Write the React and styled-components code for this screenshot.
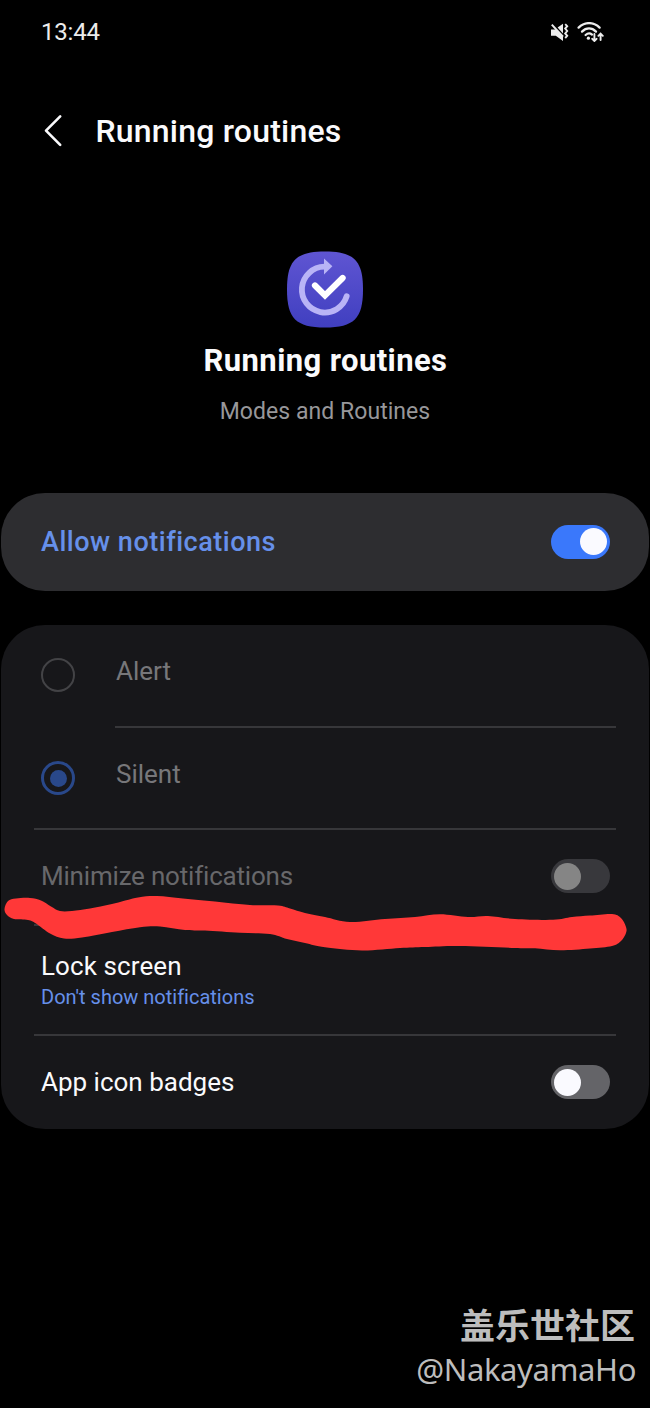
import React from "react";
import styled, { createGlobalStyle } from "styled-components";

const GlobalStyle = createGlobalStyle`
  * { box-sizing: border-box; }
  html, body { margin: 0; padding: 0; background: #000; }
  body {
    font-family: Roboto, "Noto Sans CJK SC", sans-serif;
    font-variant-ligatures: none;
    color: #fafafc;
  }
  h1, h2, p { margin: 0; }
`;

const Screen = styled.main`
  position: relative;
  display: flex;
  flex-direction: column;
  width: 650px;
  height: 1408px;
  background: #000;
  overflow: hidden;
`;

const StatusBar = styled.div`
  display: flex;
  align-items: center;
  justify-content: space-between;
  height: 64px;
  padding: 0 45px 0 41px;
`;

const Clock = styled.span`
  font-size: 24px;
  line-height: 28px;
  letter-spacing: -0.2px;
  color: #ececec;
`;

const StatusIcons = styled.div`
  display: flex;
  gap: 8px;
  svg { display: block; }
`;

const TopBar = styled.header`
  display: flex;
  align-items: center;
  height: 133px;
  padding: 0 44px;
  gap: 32.5px;
  svg { display: block; }
`;

const PageTitle = styled.h1`
  font-size: 32px;
  line-height: 40px;
  font-weight: 500;
  letter-spacing: 0.2px;
`;

const Hero = styled.section`
  display: flex;
  flex-direction: column;
  align-items: center;
  height: 296px;
  padding-top: 54px;
  svg { display: block; }
`;

const HeroTitle = styled.h2`
  margin-top: 14px;
  padding-left: 1px;
  font-size: 31px;
  line-height: 38px;
  font-weight: 700;
  letter-spacing: 0.4px;
`;

const HeroCaption = styled.p`
  margin-top: 17px;
  font-size: 23px;
  line-height: 30px;
  letter-spacing: 0.05px;
  color: #97979a;
`;

const Card = styled.section`
  margin: 0 1px ${(p) => p.$gap || 0}px;
  border-radius: 44px;
  background: ${(p) => p.$bg};
`;

const Row = styled.div`
  display: flex;
  align-items: center;
  justify-content: ${(p) => (p.$start ? "flex-start" : "space-between")};
  height: ${(p) => p.$h}px;
  padding: 0 39px ${(p) => p.$bottom || 0}px 40px;
`;

const Divider = styled.hr`
  height: 2px;
  margin: 0 33px 0 ${(p) => p.$left}px;
  border: 0;
  background: #37373a;
`;

const Label = styled.span`
  font-size: ${(p) => p.$size || 26}px;
  line-height: 34px;
  font-weight: ${(p) => p.$weight || 400};
  letter-spacing: ${(p) => p.$track || 0}px;
  color: ${(p) => p.$color || "#fafafc"};
`;

const OptionLabel = styled(Label)`
  margin: 0 0 8px 41px;
`;

const Stack = styled.div`
  display: flex;
  flex-direction: column;
`;

const Detail = styled.span`
  font-size: 20px;
  line-height: 28px;
  color: #6690ea;
`;

const Track = styled.span`
  display: flex;
  align-items: center;
  justify-content: ${(p) => (p.$on ? "flex-end" : "flex-start")};
  width: 59px;
  height: 34px;
  padding: 0 3px;
  border-radius: 17px;
  background: ${(p) => p.$bg};
`;

const Knob = styled.span`
  width: 27px;
  height: 27px;
  border-radius: 50%;
  background: ${(p) => p.$bg};
`;

const Radio = styled.span`
  display: flex;
  align-items: center;
  justify-content: center;
  width: 34px;
  height: 34px;
  border: ${(p) => (p.$on ? "3px solid #29488a" : "2px solid #434346")};
  border-radius: 50%;
`;

const Dot = styled.span`
  width: 17px;
  height: 17px;
  border-radius: 50%;
  background: #29488a;
`;

const Scribble = styled.svg`
  position: absolute;
  left: 0;
  top: 889px;
`;

const Watermark = styled.footer`
  display: flex;
  flex-direction: column;
  align-items: flex-end;
  margin-top: auto;
  padding: 0 14px 17px 0;
  color: #bdbdbd;
`;

const Community = styled.span`
  margin-right: 1px;
  font-family: "Noto Sans CJK SC", sans-serif;
  font-weight: 700;
  font-size: 35px;
  line-height: 49px;
`;

const Author = styled.span`
  font-family: "Noto Sans", sans-serif;
  font-size: 31px;
  line-height: 43px;
  letter-spacing: -0.4px;
`;

function Switch({ on, track, knob = "#fafaff" }) {
  return (
    <Track $on={on} $bg={track}>
      <Knob $bg={knob} />
    </Track>
  );
}

function MuteIcon() {
  return (
    <svg width="19" height="20" viewBox="0 0 19 20" fill="none">
      <path d="M1 7.600h4l1.400.2 6.600 7V19l-7.200-5.200H1z" fill="#ececec" />
      <path d="M7.600 5.600L13 1.800v9.600z" fill="#ececec" />
      <path d="M1.800 2.600L13 14.800" stroke="#ececec" strokeWidth="2" />
      <path d="M15.200 2.200l2 2-2 2.400 2 2.400-2 2.400 2 2.400-2 2.200" stroke="#ececec" strokeWidth="1.900" />
    </svg>
  );
}

function WifiIcon() {
  return (
    <svg width="28" height="20" viewBox="0 0 28 20" fill="none" stroke="#ececec" strokeWidth="2.3" strokeLinecap="round">
      <path d="M1.600 5.600C7.800-0.400 16.400-0.400 22.600 5.600" />
      <path d="M5 9.600c4.200-4.200 9.800-4.200 14 0" />
      <path d="M8.600 13c2.200-1.900 4.600-1.900 6.400-.4" />
      <circle cx="11.400" cy="16.200" r="1.600" fill="#ececec" stroke="none" />
      <path d="M17.400 12v6.400M15.200 16.800l2.200 2.200 2.200-2.200M23.600 18v-6M21.400 13.800l2.200-2.200 2.200 2.200" strokeWidth="1.900" />
    </svg>
  );
}

function BackIcon() {
  return (
    <svg width="19" height="34" viewBox="0 0 19 34" fill="none">
      <path d="M16.200 2.400L2 16.600l14.200 14.200" stroke="#fafafc" strokeWidth="2.600" strokeLinecap="round" strokeLinejoin="round" />
    </svg>
  );
}

function RoutinesIcon() {
  return (
    <svg width="76" height="77" viewBox="0 0 76 77" fill="none">
      <defs>
        <linearGradient id="tile" x1="0" y1="0" x2="0" y2="1">
          <stop offset="0" stopColor="#5f55d2" />
          <stop offset="1" stopColor="#403fc0" />
        </linearGradient>
      </defs>
      <path d="M38 .5C67 .5 76 9.500 76 38.500S67 76.500 38 76.500 0 67.500 0 38.500 9 .5 38 .5z" fill="url(#tile)" />
      <path d="M59.700 45.200A22.900 22.900 0 1 1 37.500 15.700" stroke="#b9b4f6" strokeWidth="5.800" strokeLinecap="round" />
      <path d="M37 7.600l8.400 7.600-8.400 8.200z" fill="#b9b4f6" />
      <path d="M28 34.500l10 9.900 17.600-17.400" stroke="#fff" strokeWidth="6.200" strokeLinecap="round" strokeLinejoin="miter" />
    </svg>
  );
}

// Outline of the red marker stroke, clockwise from its left end.
const markerOutline = [
  [4.500, 20], [8, 12], [16, 9.500], [30, 9], [41, 11.500], [51, 17.500], [60, 22], [72, 22], [90, 19.500], [112, 15],
  [138, 8.500], [157, 7], [183, 9.500], [215, 12.500], [250, 16], [278, 16.500], [290, 19.500], [305, 24], [325, 28],
  [350, 33], [385, 30], [415, 28], [440, 25.200], [468, 28], [488, 27], [515, 30], [553, 30.800], [572, 28],
  [590, 26.500], [612, 25], [621, 29], [626, 38], [626, 44], [621, 52], [612, 57], [590, 59.500], [560, 61.300], [535, 59.300],
  [515, 59], [460, 57], [425, 58], [400, 59], [362, 61.500], [325, 58.300], [305, 54], [287, 50], [270, 45],
  [240, 43.800], [205, 41.600], [185, 41], [160, 37.500], [140, 38.300], [112, 43], [82, 48.500], [64, 49.500],
  [50, 44.500], [36, 34.500], [28, 31], [14, 30], [7, 26],
];

function smoothPath(points) {
  const n = points.length;
  const at = (i) => points[(i + n) % n];
  let d = `M${points[0].join(" ")}`;
  for (let i = 0; i < n; i += 1) {
    const [a, b, c, e] = [at(i - 1), at(i), at(i + 1), at(i + 2)];
    d += `C${b[0] + (c[0] - a[0]) / 6} ${b[1] + (c[1] - a[1]) / 6} ${c[0] - (e[0] - b[0]) / 6} ${c[1] - (e[1] - b[1]) / 6} ${c[0]} ${c[1]}`;
  }
  return `${d}Z`;
}

export default function App() {
  return (
    <>
      <GlobalStyle />
      <Screen>
        <StatusBar>
          <Clock>13:44</Clock>
          <StatusIcons>
            <MuteIcon />
            <WifiIcon />
          </StatusIcons>
        </StatusBar>
        <TopBar>
          <BackIcon />
          <PageTitle>Running routines</PageTitle>
        </TopBar>
        <Hero>
          <RoutinesIcon />
          <HeroTitle>Running routines</HeroTitle>
          <HeroCaption>Modes and Routines</HeroCaption>
        </Hero>
        <Card $bg="#2d2d30" $gap={34}>
          <Row $h={98} $bottom={1}>
            <Label $size={27} $weight={500} $track={0.52} $color="#6690ea">Allow notifications</Label>
            <Switch on track="#3a78fb" />
          </Row>
        </Card>
        <Card $bg="#17171a">
          <Row $h={101} $bottom={1} $start>
            <Radio />
            <OptionLabel $color="#77777a">Alert</OptionLabel>
          </Row>
          <Divider $left={114} />
          <Row $h={100} $bottom={0} $start>
            <Radio $on><Dot /></Radio>
            <OptionLabel $color="#77777a">Silent</OptionLabel>
          </Row>
          <Divider $left={33} />
          <Row $h={94} $bottom={2}>
            <Label $color="#68686b" $track={-0.2}>Minimize notifications</Label>
            <Switch track="#38383c" knob="#858585" />
          </Row>
          <Divider $left={33} />
          <Row $h={108}>
            <Stack>
              <Label $track={0.1}>Lock screen</Label>
              <Detail>Don't show notifications</Detail>
            </Stack>
          </Row>
          <Divider $left={33} />
          <Row $h={93} $bottom={1}>
            <Label>App icon badges</Label>
            <Switch track="#646468" />
          </Row>
        </Card>
        <Scribble width="650" height="70" viewBox="0 0 650 70">
          <path d={smoothPath(markerOutline)} fill="#ff3838" />
        </Scribble>
        <Watermark>
          <Community>盖乐世社区</Community>
          <Author>@NakayamaHo</Author>
        </Watermark>
      </Screen>
    </>
  );
}
